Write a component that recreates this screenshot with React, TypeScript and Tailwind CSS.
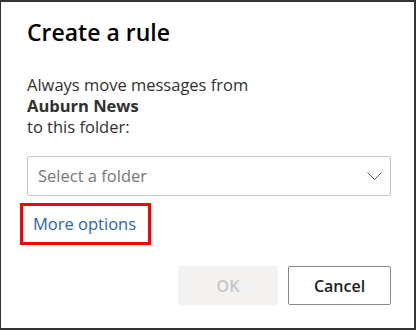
export default function App() {
    return (
        <div
            className="w-[416px] h-[330px] bg-white border-[#333] border-t-2 border-l border-r-2 border-b-2 flex flex-col pl-[26px] pr-[23px] text-[#323130]"
            style={{ fontFamily: '"Segoe UI", "Open Sans", sans-serif' }}
        >
            {/* Title */}
            <h1 className="mt-[14px] text-[23px] leading-[32px] font-semibold text-black">
                Create a rule
            </h1>

            {/* Message */}
            <p className="mt-[26px] text-[16.5px] leading-[21px] text-[#323130]">
                Always move messages from
                <br />
                <span className="font-bold">Auburn News</span>
                <br />
                to this folder:
            </p>

            {/* Folder dropdown */}
            <button className="mt-[19px] h-[40px] w-full flex items-center justify-between border border-[#c8c6c4] rounded-[2px] pl-[10px] pr-[7px] text-[16.5px] text-[#767676]">
                <span>Select a folder</span>
                <svg width="15" height="9" viewBox="0 0 15 9" fill="none" className="mr-[1px]">
                    <path d="M0.5 0.5 L7.5 7.5 L14.5 0.5" stroke="#605e5c" strokeWidth="1" />
                </svg>
            </button>

            {/* More options */}
            <div className="mt-[7px] -ml-[7px] w-[131px] h-[42px] border-[3px] border-[#ff0000] flex items-center pl-[10px]">
                <a href="#" className="text-[16.5px] text-[#2b64b8]">
                    More options
                </a>
            </div>

            {/* Actions */}
            <div className="mt-[21px] flex justify-end gap-[10px]">
                <button className="w-[100px] h-[39px] rounded-[2px] bg-[#f3f2f1] text-[16px] font-semibold text-[#c8c6c4]">
                    OK
                </button>
                <button className="w-[103px] h-[39px] rounded-[2px] border border-[#8a8886] bg-white text-[16px] font-semibold text-[#201f1e]">
                    Cancel
                </button>
            </div>
        </div>
    )
}
